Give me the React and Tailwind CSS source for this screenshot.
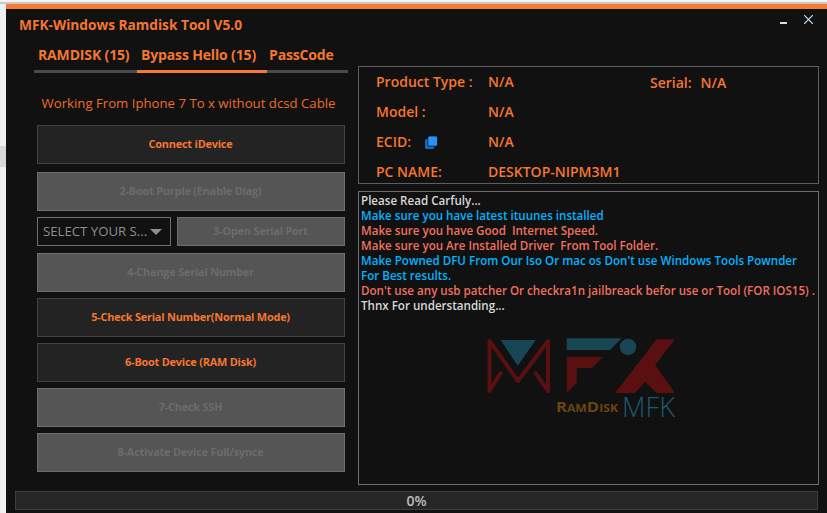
const FONT = "font-['Open_Sans','Noto_Sans',sans-serif]";

function ActionButton({ label, disabled, className = "" }) {
  return (
    <button
      className={
        "h-[39px] border text-[10.9px] font-bold tracking-[-0.2px] pr-[1px] " +
        (disabled
          ? "bg-[#555555] border-[#6e6e6e] text-[#6c6c6c] "
          : "bg-[#232323] border-[#434343] text-[#f5762f] ") +
        className
      }
    >
      {label}
    </button>
  );
}

function InfoRow({ label, value, children }) {
  return (
    <div className="flex h-[30px] items-center text-[14px] font-semibold text-[#f5762f]">
      <div className="w-[112px] flex items-center">
        {label}
        {children}
      </div>
      <div>{value}</div>
    </div>
  );
}

// drawn in page coordinates, see viewBox
function Logo() {
  return (
    <svg
      viewBox="480 330 200 95"
      className="absolute left-[121px] top-[138px] w-[200px] h-[95px]"
    >
      <path
        d="M500.5 373L489.5 391V341L518 381L548 341V391L535.5 373"
        fill="none"
        stroke="#5a1010"
        strokeWidth="4"
        strokeLinejoin="round"
        strokeLinecap="round"
      />
      <path d="M500.7 340H535.7L517.7 365.7Z" fill="#194655" />
      <path d="M566.7 338.3H621.7L610 350H566.7Z" fill="#194655" />
      <path d="M566.7 356.7H603L592 368H576.7V383L566.7 393Z" fill="#5a1010" />
      <circle cx="628" cy="347" r="8.3" fill="#194655" />
      <path d="M615 393L656.7 339.3H675L655 365L675 393H656.7L645 381.7L635 393Z" fill="#5a1010" />
      <text
        x="556"
        y="412"
        fontSize="15"
        fontWeight="700"
        fill="#6a4510"
        textLength="62"
        lengthAdjust="spacingAndGlyphs"
        style={{ fontVariant: "small-caps" }}
      >
        RamDisk
      </text>
      <text
        x="622"
        y="417"
        fontSize="27"
        fontWeight="300"
        fill="#1d5a70"
        textLength="53"
        lengthAdjust="spacingAndGlyphs"
      >
        MFK
      </text>
    </svg>
  );
}

export default function App() {
  return (
    <div className={"w-[827px] h-[513px] overflow-hidden flex flex-col bg-[#f0f0f0] " + FONT}>
      <div className="h-[2px] bg-[#f4f4f4]" />
      <div className="h-[2px] bg-[#c8c8c8]" />
      <div className="flex-1 flex min-h-0">
        <div className="w-[6px] flex flex-col bg-[#f0f0f0]">
          <div className="mt-[142px] h-[21px] bg-[#d8d8d8]" />
        </div>
        <div className="flex-1 flex flex-col border-t-[5px] border-[#f97a35] bg-[#111111] relative">
          <div className="h-[24px] pl-[13px] pt-[4px] text-[13.7px] leading-[24px] font-bold text-[#f5762f]">
            MFK-Windows Ramdisk Tool V5.0
          </div>
          <div className="absolute right-[14px] top-[6px] flex items-start gap-[17px] text-[#cfe0ee]">
            <div className="w-[7px] h-[2px] mt-[7px] bg-[#cfe0ee]" />
            <svg width="9" height="9" viewBox="0 0 9 9" stroke="currentColor" strokeWidth="1.2">
              <path d="M0 0L9 9M9 0L0 9" />
            </svg>
          </div>

          <div className="flex flex-1 min-h-0 pl-[28px] pr-[8px] pt-[10px] gap-[10px]">
            <div className="w-[314px] flex flex-col">
              <div className="flex h-[30px] border-b-[3px] border-[#4a4a4a] text-[14px] font-bold tracking-[-0.15px] text-[#f5762f]">
                <div className="w-[103px] pl-[4px] pt-[1px]">RAMDISK (15)</div>
                <div className="w-[130px] -mb-[3px] border-b-[3px] border-[#f97a35] pl-[4px] pt-[1px]">Bypass Hello (15)</div>
                <div className="pl-[2px] pt-[1px]">PassCode</div>
              </div>
              <div className="pl-[3px] w-[311px] mt-[20px] flex flex-col gap-[6px]">
                <div className="text-center text-[13.2px] h-[24px] mb-[2px] pr-[5px] leading-[20px] whitespace-nowrap text-[#ee6c2b]">
                  Working From Iphone 7 To x without dcsd Cable
                </div>
                <ActionButton label="Connect iDevice" className="mb-[2px]" />
                <ActionButton label="2-Boot Purple (Enable Diag)" disabled />
                <div className="flex gap-[6px] h-[29px] mb-[1px]">
                  <div className="w-[134px] flex items-center justify-between border border-[#6e6e6e] bg-[#111111] pl-[5px] pr-[8px] text-[13.2px] whitespace-nowrap text-[#8f8f8f]">
                    <span>SELECT YOUR S...</span>
                    <span className="border-x-[6px] border-t-[6px] border-x-transparent border-t-[#8f8f8f]" />
                  </div>
                  <ActionButton label="3-Open Serial Port" disabled className="flex-1 !h-[29px]" />
                </div>
                <ActionButton label="4-Change Serial Number" disabled />
                <ActionButton label="5-Check Serial Number(Normal Mode)" />
                <ActionButton label="6-Boot Device (RAM Disk)" />
                <ActionButton label="7-Check SSH" disabled />
                <ActionButton label="8-Activate Device Full/synce" disabled />
              </div>
            </div>

            <div className="flex-1 flex flex-col gap-[7px] pt-[23px] h-[442px]">
              <div className="relative h-[118px] border border-[#5e5e5e] pl-[17px]">
                <div className="-mt-[1px]">
                  <InfoRow label="Product Type :" value="N/A" />
                  <InfoRow label="Model :" value="N/A" />
                  <InfoRow label="ECID:" value="N/A">
                    <svg viewBox="0 0 14 14" className="w-[13px] h-[13px] ml-[14px] mt-[3px]">
                      <rect x="0" y="3" width="10" height="11" rx="2" fill="#1668c4" />
                      <rect x="3" y="0" width="10.5" height="11" rx="2" fill="#2a92f2" stroke="#111111" strokeWidth="0.8" />
                    </svg>
                  </InfoRow>
                  <InfoRow label="PC NAME:" value="DESKTOP-NIPM3M1" />
                </div>
                <div className="absolute left-[291px] top-0 flex h-[30px] items-center gap-[9px] text-[14px] font-semibold text-[#f5762f]">
                  <span>Serial:</span>
                  <span>N/A</span>
                </div>
              </div>
              <div className="relative flex-1 border border-[#6e6e6e] px-[2px] pt-[1px] text-[11.6px] font-semibold leading-[15px] whitespace-pre">
                <div className="text-[#d8d8d8]">Please Read Carfuly...</div>
                <div className="text-[#00b4ff]">Make sure you have latest ituunes installed</div>
                <div className="text-[#f0705f]">Make sure you have Good  Internet Speed.</div>
                <div className="text-[#f0705f]">Make sure you Are Installed Driver  From Tool Folder.</div>
                <div className="text-[#00b4ff]">
                  Make Powned DFU From Our Iso Or mac os Don't use Windows Tools Pownder
                  <br />
                  For Best results.
                </div>
                <div className="text-[#f0705f]">Don't use any usb patcher Or checkra1n jailbreack befor use or Tool (FOR IOS15) .</div>
                <div className="text-[#d8d8d8]">Thnx For understanding...</div>
                <Logo />
              </div>
            </div>
          </div>

          <div className="mx-[9px] mb-[3px] h-[19px] border border-[#3e3e3e] bg-[#262626] text-center text-[14px] leading-[17px] font-semibold text-[#bdbdbd]">
            0%
          </div>
        </div>
      </div>
    </div>
  );
}
